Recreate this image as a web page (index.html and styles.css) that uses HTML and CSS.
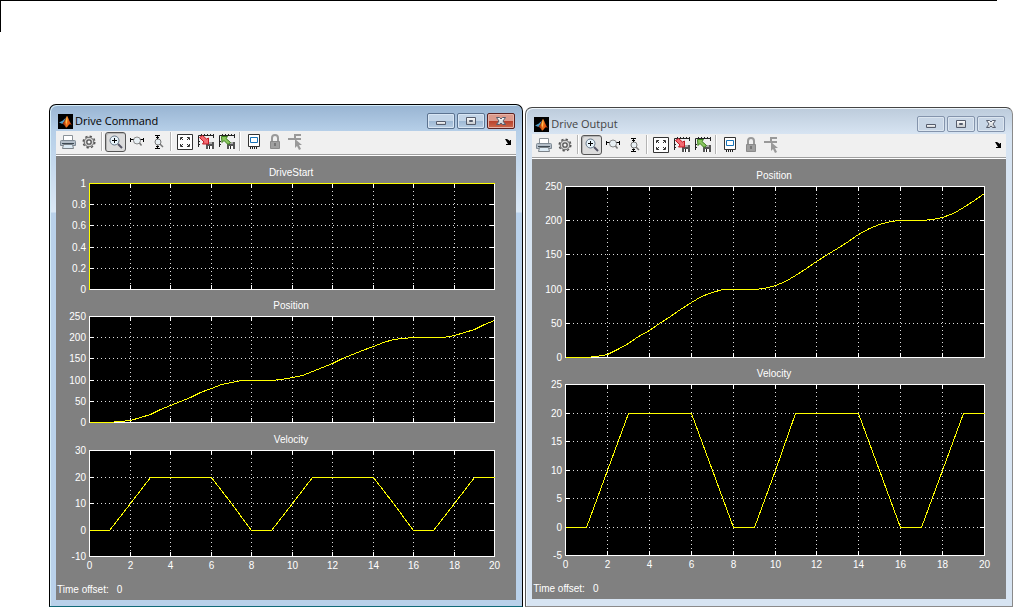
FILE: index.html
```html
<!DOCTYPE html>
<html lang="en">
<head>
<meta charset="utf-8">
<meta name="viewport" content="width=device-width, initial-scale=1">
<title>Drive scopes</title>
<link rel="stylesheet" href="styles.css">
</head>
<body>
<svg class="sprite" aria-hidden="true">
  <defs>
    <linearGradient id="flame" x1="0" x2="1" y1="0" y2="0">
      <stop offset="0" stop-color="#8a1c06"/><stop offset=".45" stop-color="#f0721c"/><stop offset="1" stop-color="#d03808"/>
    </linearGradient>
    <linearGradient id="metal" x1="0" x2="0" y1="0" y2="1">
      <stop offset="0" stop-color="#fff"/><stop offset="1" stop-color="#c4c8cc"/>
    </linearGradient>
  </defs>
  <symbol id="i-matlab" viewBox="0 0 15 15">
    <path fill="#000" d="M0 0h15v15H0z"/>
    <path fill="#4f9bc4" d="M1 8.500l3.500-1.800L7 4.500 8 3.400 6.500 7 4.500 10z"/>
    <path fill="url(#flame)" d="M4.500 9.800L6.500 7 9 1.800c1.200 1.500 2.600 6.500 5 9.500-1.600-1.400-2.600-1.200-3.600.2-.8 1.200-1.600 2-2.400 2.300C7.300 12.300 6.200 10.700 4.500 9.800z"/>
    <path fill="#ffc04a" d="M9 2c.7 2 .5 6-.8 9L7.500 8z"/>
  </symbol>
  <symbol id="i-print" viewBox="0 0 16 16">
    <path fill="#fff" stroke="#8b9298" d="M3.500 6.500v-5h9v5"/>
    <path fill="#b4bec8" stroke="#7f8a94" d="M1.500 6.500h13a1 1 0 0 1 1 1v4h-15v-4a1 1 0 0 1 1-1z"/>
    <path stroke="#3e4a54" d="M2 9.500h12"/>
    <path fill="#dceaf4" stroke="#7b8288" d="M3.500 10.500h9l1 4h-11z"/>
  </symbol>
  <symbol id="i-gear" viewBox="0 0 16 16">
    <circle cx="8" cy="8" r="5.800" fill="none" stroke="#555" stroke-width="1.500" stroke-dasharray="2.300 2.250"/>
    <circle cx="8" cy="8" r="4.800" fill="#d4d4d4" stroke="#666"/>
    <circle cx="8" cy="8" r="2.200" fill="#f4f4f4" stroke="#555" stroke-width="1.300"/>
  </symbol>
  <symbol id="i-zoom" viewBox="0 0 16 16">
    <path stroke="#556" stroke-width="2" d="M10 10l4 4"/>
    <circle cx="6.500" cy="6.500" r="4.500" fill="#e8f4fb" stroke="#678"/>
    <path stroke="#000" d="M4 6.500h5M6.500 4v5"/>
  </symbol>
  <symbol id="i-zoomx" viewBox="0 0 16 16">
    <circle cx="8" cy="6.500" r="3.500" fill="#e8f0f4" stroke="#888"/>
    <path stroke="#777" stroke-width="1.500" d="M10.500 9l2 2.500"/>
    <path stroke="#000" d="M1.500 4v4M14.500 4v4M2 5.500h2.500M11.500 5.500H14"/>
  </symbol>
  <symbol id="i-zoomy" viewBox="0 0 16 16">
    <circle cx="8" cy="8" r="3" fill="#e8f0f4" stroke="#777"/>
    <path stroke="#777" stroke-width="1.500" d="M10 10l3 3"/>
    <path stroke="#000" d="M5 1.500h5M5 14.500h5M7.500 2v3M7.500 11.500V14M6 3.500h3M6 12.500h3"/>
  </symbol>
  <symbol id="i-fit" viewBox="0 0 16 16">
    <path fill="#fff" stroke="#333" d="M.5.500h15v15H.5z"/>
    <path stroke="#333" fill="none" d="M3.500 6V3.500H6M10 3.500h2.500V6M12.500 10v2.500H10M6 12.500H3.500V10M4 4l2 2M12 4l-2 2M12 12l-2-2M4 12l2-2"/>
  </symbol>
  <symbol id="i-floppy" viewBox="0 0 16 16">
    <path stroke="#222" fill="none" d="M.5 13V1.500H15M3.500 0v2M6.500 0v2M9.500 0v2M12.500 0v2M15.500 0v4M0 7.500h2M0 10.500h2"/>
    <path fill="#555" d="M8 8h8v7H8z"/>
    <path fill="#aaa" d="M10 8h4v2h-4z"/>
    <path fill="#fff" d="M10 12h4v3h-4z"/>
    <path fill="#222" d="M11 12h1v3h-1z"/>
  </symbol>
  <symbol id="i-save" viewBox="0 0 16 16">
    <use href="#i-floppy"/>
    <path fill="#f36a72" stroke="#c01822" d="M1.500 3.500l3-2 4 3.500 2-1v6h-6l1.500-2z"/>
  </symbol>
  <symbol id="i-restore" viewBox="0 0 16 16">
    <use href="#i-floppy"/>
    <path fill="#8cc860" stroke="#3a7c1c" d="M2.500 2.500h6L7 4.500l4.500 4-2.500 2-4-4-2 2z"/>
  </symbol>
  <symbol id="i-float" viewBox="0 0 16 16">
    <path fill="#fff" stroke="#333" d="M2.500.500h11v12h-11z"/>
    <path fill="#fff" stroke="#1673b8" d="M4.500 3.500h7v5h-7z"/>
    <path stroke="#222" d="M4.500 13v2M6.500 13v2M8.500 13v2M10.500 13v2"/>
  </symbol>
  <symbol id="i-lock" viewBox="0 0 16 16">
    <path fill="none" stroke="#999" stroke-width="2" d="M5 8V4a3 3 0 0 1 6 0v4"/>
    <path fill="#a0a0a0" stroke="#8a8a8a" d="M3.500 7.500h9v7h-9z"/>
    <path fill="#777" d="M7 9h2v3H7z"/>
  </symbol>
  <symbol id="i-signal" viewBox="0 0 16 16">
    <path stroke="#999" stroke-width="2" fill="none" d="M0 5h13M7 5V1h6"/>
    <path fill="#999" d="M7 5l7 6h-3l2 4-2 1-2-4-2 2z"/>
  </symbol>
  <symbol id="i-dock" viewBox="0 0 8 8">
    <path fill="#000" d="M1 1h2l3 2V2h1v5H2V6h2z"/>
  </symbol>
  <symbol id="i-min" viewBox="0 0 14 12">
    <path fill="url(#metal)" stroke="#555c6c" d="M2.500 6.500h9v3h-9z"/>
  </symbol>
  <symbol id="i-max" viewBox="0 0 14 12">
    <path fill="url(#metal)" stroke="#555c6c" fill-rule="evenodd" d="M2.500 2.500h9v7h-9zM5.500 5.500v1h3v-1z"/>
  </symbol>
  <symbol id="i-close" viewBox="0 0 14 12">
    <path fill="url(#metal)" stroke="#555c6c" d="M2.500 2.500h3L7 4l1.500-1.500h3L9 6l2.500 3.500h-3L7 8 5.500 9.500h-3L5 6z"/>
  </symbol>
</svg>

<header class="page-rule"></header>

<main class="desktop">
  <section class="window window--active" aria-label="Drive Command">
    <div class="titlebar">
      <svg class="app-icon"><use href="#i-matlab"/></svg>
      <h1 class="title">Drive Command</h1>
      <button class="caption" aria-label="Minimize"><svg><use href="#i-min"/></svg></button>
      <button class="caption" aria-label="Maximize"><svg><use href="#i-max"/></svg></button>
      <button class="caption caption--close" aria-label="Close"><svg><use href="#i-close"/></svg></button>
    </div>
    <div class="toolbar" role="toolbar" aria-label="Scope tools">
      <button class="tool" aria-label="Print"><svg><use href="#i-print"/></svg></button>
      <button class="tool" aria-label="Parameters"><svg><use href="#i-gear"/></svg></button>
      <span class="sep"></span>
      <button class="tool tool--on" aria-label="Zoom" aria-pressed="true"><svg><use href="#i-zoom"/></svg></button>
      <button class="tool" aria-label="Zoom X-axis"><svg><use href="#i-zoomx"/></svg></button>
      <button class="tool" aria-label="Zoom Y-axis"><svg><use href="#i-zoomy"/></svg></button>
      <span class="sep"></span>
      <button class="tool" aria-label="Autoscale"><svg><use href="#i-fit"/></svg></button>
      <button class="tool" aria-label="Save axes settings"><svg><use href="#i-save"/></svg></button>
      <button class="tool" aria-label="Restore axes settings"><svg><use href="#i-restore"/></svg></button>
      <span class="sep"></span>
      <button class="tool" aria-label="Floating scope"><svg><use href="#i-float"/></svg></button>
      <button class="tool" aria-label="Lock axes" disabled><svg><use href="#i-lock"/></svg></button>
      <button class="tool" aria-label="Signal selection" disabled><svg><use href="#i-signal"/></svg></button>
      <button class="dock" aria-label="Dock"><svg><use href="#i-dock"/></svg></button>
    </div>
    <div class="scope">
      <figure class="axes" data-signal="start" data-min="0" data-max="1" data-step="0.2">
        <figcaption class="axes-title">DriveStart</figcaption>
        <div class="plot"></div>
      </figure>
      <figure class="axes" data-signal="position" data-min="0" data-max="250" data-step="50">
        <figcaption class="axes-title">Position</figcaption>
        <div class="plot"></div>
      </figure>
      <figure class="axes" data-signal="velocity" data-min="-10" data-max="30" data-step="10" data-times="yes">
        <figcaption class="axes-title">Velocity</figcaption>
        <div class="plot"></div>
      </figure>
      <p class="offset"><span>Time offset:</span><span>0</span></p>
    </div>
  </section>

  <section class="window window--idle" aria-label="Drive Output">
    <div class="titlebar">
      <svg class="app-icon"><use href="#i-matlab"/></svg>
      <h1 class="title">Drive Output</h1>
      <button class="caption" aria-label="Minimize"><svg><use href="#i-min"/></svg></button>
      <button class="caption" aria-label="Maximize"><svg><use href="#i-max"/></svg></button>
      <button class="caption caption--close" aria-label="Close"><svg><use href="#i-close"/></svg></button>
    </div>
    <div class="toolbar" role="toolbar" aria-label="Scope tools">
      <button class="tool" aria-label="Print"><svg><use href="#i-print"/></svg></button>
      <button class="tool" aria-label="Parameters"><svg><use href="#i-gear"/></svg></button>
      <span class="sep"></span>
      <button class="tool tool--on" aria-label="Zoom" aria-pressed="true"><svg><use href="#i-zoom"/></svg></button>
      <button class="tool" aria-label="Zoom X-axis"><svg><use href="#i-zoomx"/></svg></button>
      <button class="tool" aria-label="Zoom Y-axis"><svg><use href="#i-zoomy"/></svg></button>
      <span class="sep"></span>
      <button class="tool" aria-label="Autoscale"><svg><use href="#i-fit"/></svg></button>
      <button class="tool" aria-label="Save axes settings"><svg><use href="#i-save"/></svg></button>
      <button class="tool" aria-label="Restore axes settings"><svg><use href="#i-restore"/></svg></button>
      <span class="sep"></span>
      <button class="tool" aria-label="Floating scope"><svg><use href="#i-float"/></svg></button>
      <button class="tool" aria-label="Lock axes" disabled><svg><use href="#i-lock"/></svg></button>
      <button class="tool" aria-label="Signal selection" disabled><svg><use href="#i-signal"/></svg></button>
      <button class="dock" aria-label="Dock"><svg><use href="#i-dock"/></svg></button>
    </div>
    <div class="scope">
      <figure class="axes" data-signal="position" data-min="0" data-max="250" data-step="50">
        <figcaption class="axes-title">Position</figcaption>
        <div class="plot"></div>
      </figure>
      <figure class="axes" data-signal="velocity" data-min="-5" data-max="25" data-step="5" data-times="yes">
        <figcaption class="axes-title">Velocity</figcaption>
        <div class="plot"></div>
      </figure>
      <p class="offset"><span>Time offset:</span><span>0</span></p>
    </div>
  </section>
</main>
<script src="scope.js"></script>
</body>
</html>
```
FILE: styles.css
```css
* { box-sizing: border-box; }

body {
  margin: 0;
  min-height: 100vh;
  display: flex;
  flex-direction: column;
  background: #fff;
  font-family: "Liberation Sans", Arial, sans-serif;
  font-size: 10px;
}

.sprite { position: absolute; width: 0; height: 0; }

.page-rule {
  height: 32px;
  margin-right: 16px;
  border-top: 1px solid #000;
  border-left: 1px solid #000;
}

.desktop {
  flex: 1;
  display: flex;
  gap: 2px;
  padding: 72px 0 0 49px;
}

.window {
  display: flex;
  flex-direction: column;
  min-width: 0;
  padding: 0 6px 6px;
  border: 1px solid #000;
  border-radius: 7px 7px 0 0;
}
.window--active {
  flex: 474;
  border-bottom-color: #126a78;
  background: linear-gradient(#98b4d2, #b6cfe8 26px, #dbe8f5 107px, #b9d1ea 108px);
  box-shadow: inset 1px 1px #d4ecf8;
}
.window--idle {
  flex: 488;
  margin-top: 3px;
  padding-bottom: 7px;
  border-color: #444 #8a8a8a #8a8a8a #555;
  background: linear-gradient(#bccbdb, #d7e4f2 26px);
  box-shadow: inset 1px 1px #eef5fa;
}

.titlebar {
  display: flex;
  align-items: center;
  gap: 2px;
  height: 26px;
  padding: 6px 1px 0 2px;
}
.app-icon { width: 15px; height: 15px; }
.title {
  flex: 1;
  margin: 0;
  font: 11px/16px "Open Sans", "Noto Sans", sans-serif;
  color: #000;
}
.window--idle .title { color: #444; }

.caption {
  display: grid;
  place-items: center;
  width: 28px;
  height: 16px;
  padding: 0;
  border: 1px solid #5c7390;
  border-radius: 2px;
  background: linear-gradient(#c3d5e8 48%, #9db8d4 50%, #b8cee4);
  box-shadow: inset 0 0 0 1px #d8e6f4;
}
.caption svg { width: 14px; height: 12px; }
.caption--close {
  border-color: #5a2020;
  background: linear-gradient(#dc9a8c 48%, #b8402c 50%, #cc6a4c);
  box-shadow: inset 0 0 0 1px #e8b4a8;
}
.window--idle .caption {
  border-color: #8494ac;
  background: #c8d6e6;
  box-shadow: inset 0 0 0 1px #dce6f0;
}

.toolbar {
  display: flex;
  align-items: center;
  height: 25px;
  padding: 0 0 3px 1px;
  background: #f0f0f0;
  border-bottom: 1px solid #fff;
  box-shadow: inset 0 -1px #a0a0a0;
}
.tool, .dock {
  display: grid;
  place-items: center;
  flex: none;
  width: 21px;
  height: 20px;
  padding: 0;
  border: 0;
  border-radius: 3px;
  background: none;
}
.tool svg { width: 16px; height: 16px; }
.tool--on { border: 1px solid #555; background: #dcdcdc; box-shadow: inset 1px 1px #b4b4b4; }
.dock { margin-left: auto; width: 16px; }
.dock svg { width: 8px; height: 8px; }
.sep {
  flex: none;
  width: 6px;
  height: 19px;
  background: linear-gradient(90deg, transparent 2px, #b4b4b4 2px, #b4b4b4 3px, #fff 3px, #fff 4px, transparent 4px);
}

.scope {
  flex: 1;
  display: flex;
  flex-direction: column;
  padding-top: 1px;
  background: #808080;
  color: #fff;
}
.axes {
  flex: 1;
  display: flex;
  flex-direction: column;
  margin: 0;
  padding: 0 21px 0 33px;
}
.axes-title {
  height: 26px;
  padding: 8px 2px 0 0;
  line-height: 16px;
  text-align: center;
}
.plot { flex: 1 1 60px; min-height: 60px; }
.chart { display: block; overflow: visible; }
.chart-box { fill: #000; }
.chart-frame { fill: none; stroke: #fff; shape-rendering: crispEdges; }
.chart-grid { stroke: #e0e0e0; stroke-dasharray: 1 3; shape-rendering: crispEdges; }
.chart-tick { stroke: #fff; shape-rendering: crispEdges; }
.chart-line { fill: none; stroke: #ff0; shape-rendering: crispEdges; }
.chart-label { fill: #fff; font-size: 10px; }
.chart-label--y { text-anchor: end; }
.chart-label--x { text-anchor: middle; }

.offset {
  display: flex;
  gap: 8px;
  height: 43px;
  margin: 0;
  padding: 25px 0 0 1px;
  line-height: 16px;
}
```
FILE: scope.js
```js
const NS = "http://www.w3.org/2000/svg";
const T_END = 20;

// One drive cycle lasts 8 s: ramp up, cruise, ramp down, rest.
function velocity(t) {
  const c = t < 1 ? 0 : (t - 1) % 8;
  if (c < 2) return 10 * c;
  if (c < 5) return 20;
  if (c < 7) return 20 - 10 * (c - 5);
  return 0;
}

function position(t) {
  if (t < 1) return 0;
  const cycles = Math.floor((t - 1) / 8);
  const c = (t - 1) % 8;
  let p = 100;
  if (c < 2) p = 5 * c * c;
  else if (c < 5) p = 20 + 20 * (c - 2);
  else if (c < 7) p = 100 - 5 * (7 - c) * (7 - c);
  return cycles * 100 + p;
}

function samples(signal) {
  if (signal === "start") return [[0, 0], [0, 1], [T_END, 1]];
  if (signal === "velocity") return Array.from({ length: 21 }, (_, i) => [i, velocity(i)]);
  return Array.from({ length: 41 }, (_, i) => [i / 2, position(i / 2)]);
}

function add(parent, tag, cls, attrs, text) {
  const el = document.createElementNS(NS, tag);
  el.setAttribute("class", cls);
  for (const k in attrs) el.setAttribute(k, attrs[k]);
  if (text !== undefined) el.textContent = text;
  parent.appendChild(el);
  return el;
}

function draw(axes) {
  const plot = axes.querySelector(".plot");
  const w = Math.floor(plot.clientWidth);
  const h = Math.floor(plot.clientHeight);
  const min = +axes.dataset.min;
  const max = +axes.dataset.max;
  const step = +axes.dataset.step;
  const x = t => Math.round(t / T_END * (w - 1)) + 0.5;
  const y = v => Math.round((max - v) / (max - min) * (h - 1)) + 0.5;
  const svg = add(plot, "svg", "chart", { width: w, height: 1, viewBox: `0 0 ${w} 1` });
  add(svg, "rect", "chart-box", { width: w, height: h });

  for (let t = 0; t <= T_END; t += 2) {
    if (t > 0 && t < T_END) {
      add(svg, "path", "chart-grid", { d: `M${x(t)} 0V${h}` });
      add(svg, "path", "chart-tick", { d: `M${x(t)} 0v5M${x(t)} ${h}v-5` });
    }
    if (axes.dataset.times) add(svg, "text", "chart-label chart-label--x", { x: x(t), y: h + 12 }, t);
  }
  const count = Math.round((max - min) / step);
  for (let i = 0; i <= count; i++) {
    const v = +(min + i * step).toFixed(1);
    if (i > 0 && i < count) {
      add(svg, "path", "chart-grid", { d: `M0 ${y(v)}H${w}` });
      add(svg, "path", "chart-tick", { d: `M0 ${y(v)}h5M${w} ${y(v)}h-5` });
    }
    add(svg, "text", "chart-label chart-label--y", { x: -3, y: y(v) + 3.5 }, v);
  }
  add(svg, "rect", "chart-frame", { x: 0.5, y: 0.5, width: w - 1, height: h - 1 });
  add(svg, "polyline", "chart-line", {
    points: samples(axes.dataset.signal).map(([t, v]) => `${x(t)},${y(v)}`).join(" ")
  });
}

function drawAll() {
  document.querySelectorAll(".plot").forEach(p => p.replaceChildren());
  document.querySelectorAll(".axes").forEach(draw);
}
drawAll();
window.addEventListener("resize", drawAll);
```
